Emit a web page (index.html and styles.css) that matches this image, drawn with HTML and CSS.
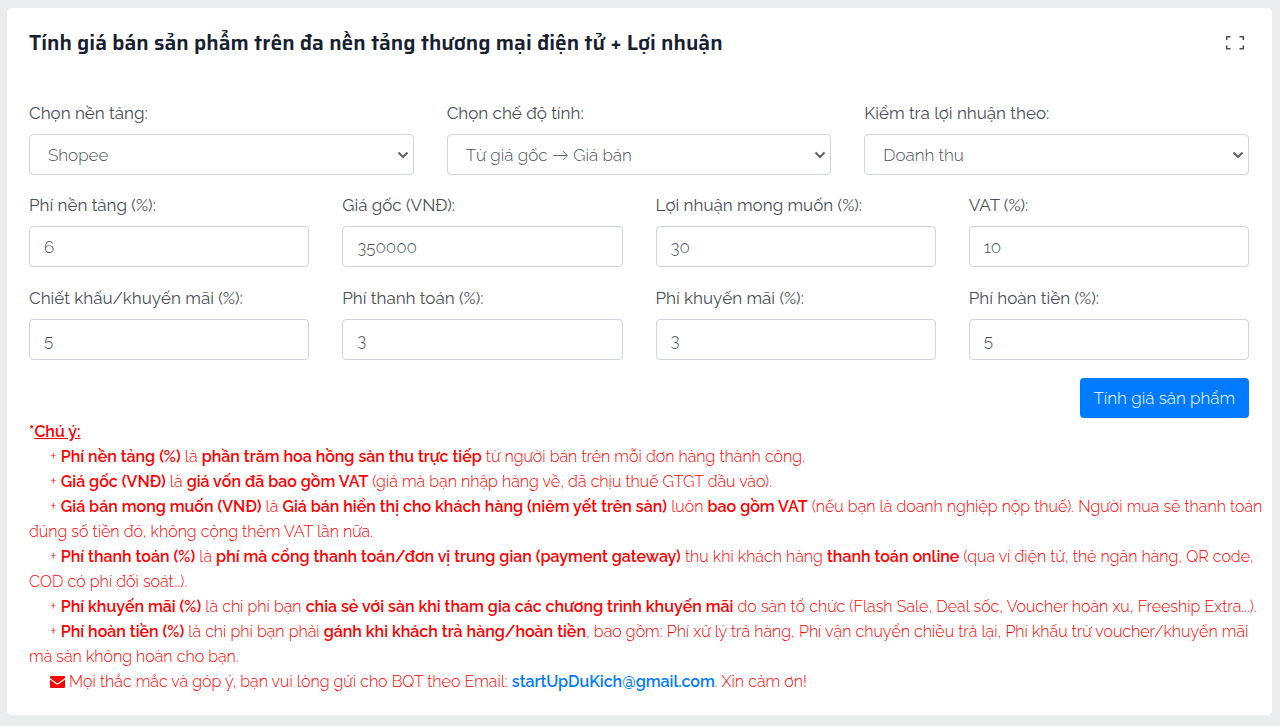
FILE: index.html
```html
<!DOCTYPE html>
<html lang="vi">
<head>
  <meta charset="UTF-8">
  <meta name="viewport" content="width=device-width, initial-scale=1.0">
  <title>Tính giá bán sản phẩm</title>
  <link rel="stylesheet" href="styles.css">
</head>
<body>

<div class="card">
  <div class="card-header">
    <h1>Tính giá bán sản phẩm trên đa nền tảng thương mại điện tử + Lợi nhuận</h1>
    <button type="button" class="btn-expand" aria-label="Toàn màn hình">
      <svg width="20" height="16" viewBox="0 0 20 16" fill="none" stroke="#4a4f57" stroke-width="1.500">
        <path d="M1.700 5V1.700H5.500M14.500 1.700H18.300V5M18.300 10.500V13.800H14.500M5.500 13.800H1.700V10.500"/>
      </svg>
    </button>
  </div>

  <form>
    <div class="row row-3">
      <div class="field">
        <label for="platform">Chọn nền tảng:</label>
        <select id="platform">
          <option>Shopee</option>
        </select>
      </div>
      <div class="field">
        <label for="mode">Chọn chế độ tính:</label>
        <select id="mode">
          <option>Từ giá gốc → Giá bán</option>
        </select>
      </div>
      <div class="field">
        <label for="profitBase">Kiểm tra lợi nhuận theo:</label>
        <select id="profitBase">
          <option>Doanh thu</option>
        </select>
      </div>
    </div>

    <div class="row row-4">
      <div class="field">
        <label for="platformFee">Phí nền tảng (%):</label>
        <input type="text" inputmode="decimal" id="platformFee" value="6">
      </div>
      <div class="field">
        <label for="cost">Giá gốc (VNĐ):</label>
        <input type="text" inputmode="decimal" id="cost" value="350000">
      </div>
      <div class="field">
        <label for="profit">Lợi nhuận mong muốn (%):</label>
        <input type="text" inputmode="decimal" id="profit" value="30">
      </div>
      <div class="field">
        <label for="vat">VAT (%):</label>
        <input type="text" inputmode="decimal" id="vat" value="10">
      </div>
      <div class="field">
        <label for="discount">Chiết khấu/khuyến mãi (%):</label>
        <input type="text" inputmode="decimal" id="discount" value="5">
      </div>
      <div class="field">
        <label for="paymentFee">Phí thanh toán (%):</label>
        <input type="text" inputmode="decimal" id="paymentFee" value="3">
      </div>
      <div class="field">
        <label for="promoFee">Phí khuyến mãi (%):</label>
        <input type="text" inputmode="decimal" id="promoFee" value="3">
      </div>
      <div class="field">
        <label for="refundFee">Phí hoàn tiền (%):</label>
        <input type="text" inputmode="decimal" id="refundFee" value="5">
      </div>
    </div>

    <div class="actions">
      <button type="button" class="btn-primary">Tính giá sản phẩm</button>
    </div>
  </form>

  <div class="notes">
    <p class="notes-title"><b>*<u>Chú ý:</u></b></p>
    <p>+ <b>Phí nền tảng (%)</b> là <b>phần trăm hoa hồng sàn thu trực tiếp</b> từ người bán trên mỗi đơn hàng thành công.</p>
    <p>+ <b>Giá gốc (VNĐ)</b> là <b>giá vốn đã bao gồm VAT</b> (giá mà bạn nhập hàng về, đã chịu thuế GTGT đầu vào).</p>
    <p>+ <b>Giá bán mong muốn (VNĐ)</b> là <b>Giá bán hiển thị cho khách hàng (niêm yết trên sàn)</b> luôn <b>bao gồm VAT</b> (nếu bạn là doanh nghiệp nộp thuế). Người mua sẽ thanh toán đúng số tiền đó, không cộng thêm VAT lần nữa.</p>
    <p>+ <b>Phí thanh toán (%)</b> là <b>phí mà cổng thanh toán/đơn vị trung gian (payment gateway)</b> thu khi khách hàng <b>thanh toán online</b> (qua ví điện tử, thẻ ngân hàng, QR code, COD có phí đối soát…).</p>
    <p>+ <b>Phí khuyến mãi (%)</b> là chi phí bạn <b>chia sẻ với sàn khi tham gia các chương trình khuyến mãi</b> do sàn tổ chức (Flash Sale, Deal sốc, Voucher hoàn xu, Freeship Extra...).</p>
    <p>+ <b>Phí hoàn tiền (%)</b> là chi phí bạn phải <b>gánh khi khách trả hàng/hoàn tiền</b>, bao gồm: Phí xử lý trả hàng, Phí vận chuyển chiều trả lại, Phí khấu trừ voucher/khuyến mãi mà sàn không hoàn cho bạn.</p>
    <p><svg class="icon-mail" width="15" height="12" viewBox="0 0 15 12" fill="red"><path d="M1 0H14Q15 0 15 1V2L8.500 6.800Q7.500 7.500 6.500 6.800L0 2V1Q0 0 1 0ZM0 3.500L5.900 7.900Q7.500 9 9.100 7.900L15 3.500V11Q15 12 14 12H1Q0 12 0 11Z"/></svg> Mọi thắc mắc và góp ý, bạn vui lòng gửi cho BQT theo Email: <a href="mailto:startUpDuKich@gmail.com">startUpDuKich@gmail.com</a>. Xin cảm ơn!</p>
  </div>
</div>

</body>
</html>
```

FILE: styles.css
```css
* {
  box-sizing: border-box;
}
body {
  margin: 8px 8px 8px 7px;
  font-family: Raleway, Lato, "Noto Sans", sans-serif;
  font-size: 17px;
  font-weight: 300;
  color: #343a40;
  background: #e9edee;
}
.card {
  padding: 22px 23px 21px 22px;
  background: #fff;
  border-radius: 4px;
  box-shadow: 0 0 3px rgba(0, 0, 0, 0.08);
}
.card-header {
  display: flex;
  justify-content: space-between;
  align-items: center;
  margin-bottom: 45px;
}
h1 {
  margin: 0;
  font-family: "Saira Semi Condensed", Saira, "Chakra Petch", Roboto, sans-serif;
  font-size: 21px;
  line-height: 26px;
  font-weight: 600;
  color: #17202e;
}
.btn-expand {
  display: flex;
  padding: 0;
  margin-right: 4px;
  border: none;
  background: none;
  cursor: pointer;
}
.row {
  display: grid;
  column-gap: 33px;
  row-gap: 19px;
  margin-bottom: 18px;
}
.row-3 {
  grid-template-columns: repeat(3, 1fr);
}
.row-4 {
  grid-template-columns: repeat(4, 1fr);
}
label {
  display: block;
  margin-bottom: 8px;
  font-weight: 400;
  line-height: 25px;
  color: #4a4f57;
}
input, select {
  display: block;
  width: 100%;
  height: 41px;
  padding: 0 14px;
  border: 1px solid #ced4da;
  border-radius: 4px;
  font-family: inherit;
  font-size: 17px;
  font-weight: 300;
  color: #495057;
  background: #fff;
}
select {
  appearance: none;
  padding: 0 30px 0 18px;
  background: #fff url("data:image/svg+xml,%3Csvg xmlns='http://www.w3.org/2000/svg' width='12' height='8' fill='none' stroke='%23606060' stroke-width='2'%3E%3Cpath d='M1.500 1.500L6 6L10.500 1.500'/%3E%3C/svg%3E") no-repeat right 4px center;
}
.actions {
  display: flex;
  justify-content: flex-end;
}
.btn-primary {
  height: 40px;
  padding: 0 14px;
  border: none;
  border-radius: 4px;
  font-family: inherit;
  font-size: 17px;
  font-weight: 300;
  color: #fff;
  background: #007bff;
  cursor: pointer;
}
.notes {
  padding-top: 1px;
  margin-right: -17px;
  font-size: 16px;
  line-height: 25px;
  color: red;
}
.notes p {
  margin: 0;
  text-indent: 21px;
}
.notes .notes-title {
  text-indent: 0;
}
.notes b, .notes a {
  font-weight: 600;
}
.notes a {
  color: #007bff;
  text-decoration: none;
}
.icon-mail {
  vertical-align: -1px;
}
```
